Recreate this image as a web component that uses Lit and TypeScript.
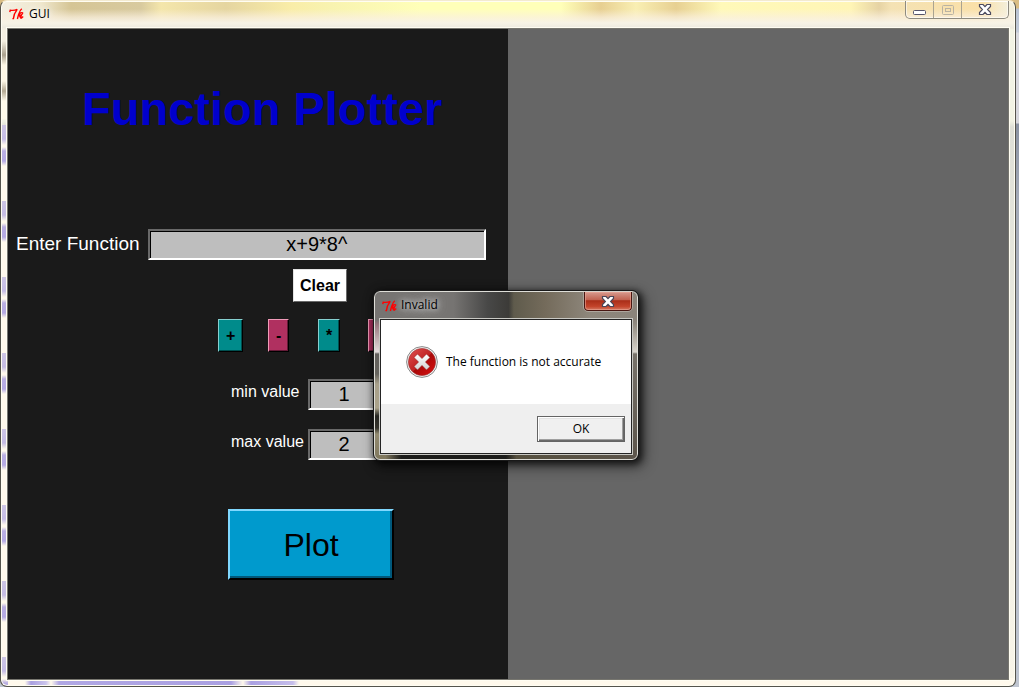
import { LitElement, html, css, svg } from "lit";
import { customElement, property } from "lit/decorators.js";

const feather = svg`
  <path d="M.8 4.2 L1.2 2.2 C3.5 2.6 6 2.4 8.2 1.4 C6.2 4 4.6 6.5 4.4 10.6 L3.4 10.6" />
  <path d="M12.8 .8 C11.4 1.8 10.4 4 9.6 6.4 L8.4 11 M9.6 7.2 C10.8 5 12.6 4.2 13.6 4.8 C14 6.2 12.2 7.2 10.4 7.4 C11 9.2 11.8 10.4 12.6 10 L14.2 8.4 M12.4 7 L11.6 9.8" />
`;

const cross = (edge: string) => svg`
  <path d="M1.5 .5 H5 L7 2.6 L9 .5 H12.5 V2.4 L9.6 5.5 L12.5 8.6 V10.5 H9 L7 8.4 L5 10.5 H1.5 V8.6 L4.4 5.5 L1.5 2.4 Z" fill="#fff" stroke=${edge} stroke-width="1.2" />
`;

@customElement("tk-logo")
class TkLogo extends LitElement {
  static styles = css`
    :host { display: block; width: 16px; height: 13px; }
    .logo { display: block; fill: none; stroke: #ff0000; stroke-width: 1.4; }
  `;
  render() {
    return html`<svg class="logo" width="16" height="13" viewBox="0 0 16 13" aria-hidden="true">${feather}</svg>`;
  }
}

@customElement("message-dialog")
class MessageDialog extends LitElement {
  @property() heading = "";
  @property() message = "";

  static styles = css`
    :host {
      display: block;
      box-sizing: border-box;
      width: 264px;
      padding: 0 5px 5px;
      border: 1px solid #deded8;
      border-radius: 6px;
      outline: 1px solid #191919;
      background:
        linear-gradient(180deg, transparent 28px, #b0768690 32px, #e3dcdc 60px, #62605c 62px, #66645e 82px, #a8a08a 92px, #aaa28a 116px, #262622 124px, #35332c 136px, #928a70 142px, #80785e 100%) 0 0 / 6px 100% no-repeat,
        linear-gradient(180deg, transparent 28px, #908a80 32px, #d8d4cc 60px, #77726a 62px, #5c554b 100%) 100% 0 / 6px 100% no-repeat,
        linear-gradient(90deg, #80785e 4%, #1c1c1a 10%, #1c1c1a 50%, #56503f 54%, #5c554b) 0 100% / 100% 7px no-repeat,
        linear-gradient(90deg, #767472, #767472 30%, #484847 43%, #3c3b38 51%, #5f5b4c 53%, #746b5b 65%, #8e877c 82%, #8b847b);
      box-shadow: 2px 2px 7px 2px #000000b0, 4px 5px 14px 2px #00000070;
      font: 12px/16px "Open Sans", sans-serif;
      color: #000;
    }
    .bar { display: flex; height: 27px; padding-left: 2px; }
    .bar tk-logo { margin-top: 8px; }
    .title {
      margin: 5px 0 0 3px;
      text-shadow: 0 0 5px #d8d8d8, 0 0 9px #c8c8c8, 0 0 12px #bbb;
    }
    .close {
      display: grid;
      place-items: center;
      box-sizing: border-box;
      width: 48px;
      height: 19px;
      margin-left: auto;
      padding: 0;
      border: 1px solid #481611;
      border-top: 0;
      border-radius: 0 0 4px 4px;
      outline: 1px solid #cfc8c080;
      box-shadow: inset 0 0 0 1px #e9a496a0;
      background: linear-gradient(#d69a8e, #c0604e 45%, #a92e18 48%, #c3442b 80%, #d57a62);
    }
    .client { border: 1px solid #242424; outline: 1px solid #c9c9c4; background: #efefef; }
    .body {
      display: flex;
      align-items: center;
      gap: 8px;
      height: 84px;
      padding-left: 25px;
      background: #fff;
    }
    .body p { margin: 0; white-space: nowrap; }
    .foot { display: flex; justify-content: flex-end; padding: 12px 6px 11px; }
    .ok {
      width: 88px;
      height: 26px;
      padding: 0;
      border: 1px solid #646464;
      box-shadow: inset 1px 1px 0 #fff, inset -1px -1px 0 #696969, inset -2px -2px 0 #a0a0a0, inset 2px 2px 0 #e3e3e3;
      background: #f0f0f0;
      font: inherit;
      color: #000;
    }
  `;

  render() {
    return html`
      <div class="bar">
        <tk-logo></tk-logo>
        <span class="title">${this.heading}</span>
        <button class="close" aria-label="Close">
          <svg width="14" height="11" viewBox="0 0 14 11">${cross("#4a4658")}</svg>
        </button>
      </div>
      <div class="client">
        <div class="body">
          <svg width="32" height="32" viewBox="0 0 32 32" aria-hidden="true">
            <defs>
              <linearGradient id="red" x1="0" y1="0" x2="1" y2="1">
                <stop offset="0" stop-color="#e05050" />
                <stop offset=".5" stop-color="#c02222" />
                <stop offset=".52" stop-color="#a80808" />
                <stop offset="1" stop-color="#dc1010" />
              </linearGradient>
              <linearGradient id="steel" x1="0" y1="0" x2="0" y2="1">
                <stop offset="0" stop-color="#fff" />
                <stop offset="1" stop-color="#d2d2d2" />
              </linearGradient>
            </defs>
            <circle cx="16" cy="16" r="15.4" fill="#f2f2f2" stroke="#8a8a8a" />
            <circle cx="16" cy="16" r="13.6" fill="url(#red)" stroke="#9a3030" stroke-width=".6" />
            <path d="M11.5 8 L16 12.6 L20.5 8 L24 11.5 L19.4 16 L24 20.5 L20.5 24 L16 19.4 L11.5 24 L8 20.5 L12.6 16 L8 11.5 Z" fill="url(#steel)" stroke="#8c1717" stroke-width=".5" />
          </svg>
          <p>${this.message}</p>
        </div>
        <div class="foot"><button class="ok">OK</button></div>
      </div>
    `;
  }
}

@customElement("app-root")
class AppRoot extends LitElement {
  static styles = css`
    :host {
      display: block;
      box-sizing: border-box;
      height: 100vh;
      padding-right: 3px;
      overflow: hidden;
      background: linear-gradient(#d9bd84 8px, #b9c2d2 9px, #c3cbd9 32px, #d8d9df 33px, #d6d6dc 123px, #8a92a2 124px, #a4abb9 200px, #bfc5d0);
      font-family: "Liberation Sans", Arial, sans-serif;
      color: #fff;
    }
    .window {
      position: relative;
      display: flex;
      flex-direction: column;
      box-sizing: border-box;
      height: 100%;
      padding: 0 6px 6px;
      border: 1px solid #55544c;
      border-top-color: #f3ead0;
      border-radius: 7px;
      box-shadow: inset 0 0 0 1px #fffdf2;
      background:
        linear-gradient(180deg, transparent 27px, #f5f0e2 28px, #f5f0e2 40px, #aaa18e 54px, #fdf7e6 64px, #fdf7e6 80px, #b3a993 90px, #fffaea 100px, #fffaea 118px, transparent 119px) 0 0 / 7px 100% no-repeat,
        repeating-linear-gradient(180deg, #cdc5e4 0, #c5bce4 14px, #fff9ec 20px, #fff9ec 22px, #b9aee2 26px, #b5aae3 36px, #fff9ec 41px, #fff9ec 76px) 0 124px / 7px 100% no-repeat,
        linear-gradient(90deg, #fff9ec 24px, #a99fe0 30px, #cbc4ec 45px, #fff9ec 50px, #b0a7e4 58px, #aaa0e2 230px, #fff9ec 242px, #aaa0e2 250px, #c6beeb 292px, #fff9ec 298px) 0 100% / 100% 8px no-repeat,
        linear-gradient(180deg, transparent 8px, #faf0e0b0 16px, #f7f3e6 22px, #edeadf 27px, transparent 28px),
        linear-gradient(90deg, #f3efe3, #efe7cd 40px, #d5c595 70px, #d8ca9f 140px, #f4e6ab 160px, #e5d5a0 225px, #f9eda8 290px, #f8f3b0 330px, #ffffb9 420px, #ffffb9 560px, #e7cf91 600px, #f9efb3 635px, #e7d092 675px, #fff9b9 720px, #fff5b6 850px, #e6d3a4 878px, #f4e2b4 890px, #fae0a8 980px, #f3f0dd 1008px) 0 0 / 100% 28px no-repeat,
        linear-gradient(#f2f3e4 120px, #dedfd6 126px, #edede2 400px, #f9f5e8);
    }
    .titlebar { display: flex; flex: none; height: 27px; color: #000; padding-left: 2px; }
    .titlebar tk-logo { margin-top: 7px; }
    .caption { margin: 5px 0 0 4px; font: 12px/16px "Open Sans", sans-serif; text-shadow: 0 0 6px #fff, 0 0 8px #fff; }
    .controls {
      display: flex;
      height: 17px;
      margin-left: auto;
      border: 1px solid #8e8b80;
      border-top: 0;
      border-radius: 0 0 5px 5px;
      box-shadow: inset 0 0 0 1px #ffffff90;
    }
    .controls button {
      display: grid;
      place-items: center;
      width: 28px;
      padding: 0;
      border: 0;
      border-right: 1px solid #aaa391;
      background: none;
    }
    .controls .x { width: 46px; border-right: 0; }
    .client { display: flex; flex: 1; min-height: 0; border: 1px solid #77766f; outline: 1px solid #fffdf2; }
    .panel { flex: 1; min-width: 0; background: #1a1a1a; }
    .plot-area { flex: 1; background: #666; }
    h1 { margin: 53px 0 0 74px; font-size: 47px; line-height: 54px; color: #0000cd; white-space: nowrap; }
    .function { display: flex; align-items: center; gap: 8px; margin: 93px 22px 0 8px; }
    label { white-space: nowrap; }
    .function label { font-size: 19px; line-height: 24px; margin-bottom: 2px; }
    input {
      box-sizing: border-box;
      height: 31px;
      min-width: 0;
      padding: 0;
      border: 2px solid;
      border-color: #696969 #fff #fff #696969;
      border-radius: 0;
      outline: 0;
      box-shadow: inset 1px 1px 0 #000;
      background: #bebebe;
      color: #000;
      font: 20px/24px "Liberation Sans", Arial, sans-serif;
      text-align: center;
    }
    .function input { flex: 1; }
    .key {
      height: 33px;
      padding: 0 7px;
      border: 1px solid;
      font: bold 16px/20px "Liberation Sans", Arial, sans-serif;
      color: #000;
    }
    .clear { display: block; margin: 9px 0 0 285px; padding: 0 6px; background: #fff; border-color: #e3e3e3 #696969 #696969 #e3e3e3; }
    .ops { display: grid; grid-template-columns: repeat(4, 50px); justify-items: start; margin: 17px 0 0 210px; }
    .teal { background: #008b8b; border-color: #86cfcf #000 #000 #86cfcf; box-shadow: inset -1px -1px 0 #004f4f; }
    .rose { background: #b03060; border-color: #f09ab8 #000 #000 #f09ab8; box-shadow: inset -1px -1px 0 #641b37; }
    .limits { display: grid; grid-template-columns: 77px 72px; row-gap: 19px; margin: 27px 0 0 223px; }
    .limits label { padding-top: 1px; font-size: 16px; line-height: 24px; }
    .plot {
      display: block;
      width: 166px;
      height: 71px;
      margin: 49px 0 0 220px;
      padding: 0;
      border: 2px solid;
      border-color: #80d8ff #000 #000 #80d8ff;
      box-shadow: inset -2px -2px 0 #00587b;
      background: #009acd;
      color: #000;
      font: 32px/40px "Liberation Sans", Arial, sans-serif;
    }
    .dialog { position: absolute; left: 373px; top: 290px; }
  `;

  render() {
    const ops = ["+", "-", "*", "/"];
    return html`
      <div class="window">
        <header class="titlebar">
          <tk-logo></tk-logo>
          <span class="caption">GUI</span>
          <div class="controls">
            <button aria-label="Minimize">
              <svg width="13" height="12" viewBox="0 0 13 12"><rect x=".5" y="6.5" width="12" height="4" rx="1" fill="#fff" stroke="#55546a" /></svg>
            </button>
            <button aria-label="Maximize" disabled>
              <svg width="12" height="10" viewBox="0 0 12 10" fill="none" stroke="#b9b3a3"><rect x=".5" y=".5" width="11" height="9" rx="1" /><rect x="3.5" y="3.5" width="5" height="3" /></svg>
            </button>
            <button class="x" aria-label="Close">
              <svg width="14" height="11" viewBox="0 0 14 11">${cross("#4c4b60")}</svg>
            </button>
          </div>
        </header>
        <main class="client">
          <section class="panel">
            <h1>Function Plotter</h1>
            <div class="function">
              <label for="fn">Enter Function</label>
              <input id="fn" type="text" value="x+9*8^" />
            </div>
            <button class="key clear">Clear</button>
            <div class="ops">
              ${ops.map((op, i) => html`<button class="key ${i % 2 ? "rose" : "teal"}">${op}</button>`)}
            </div>
            <div class="limits">
              <label for="min">min value</label>
              <input id="min" type="text" value="1" />
              <label for="max">max value</label>
              <input id="max" type="text" value="2" />
            </div>
            <button class="plot">Plot</button>
          </section>
          <section class="plot-area"></section>
        </main>
        <message-dialog class="dialog" role="alertdialog" heading="Invalid" message="The function is not accurate"></message-dialog>
      </div>
    `;
  }
}
